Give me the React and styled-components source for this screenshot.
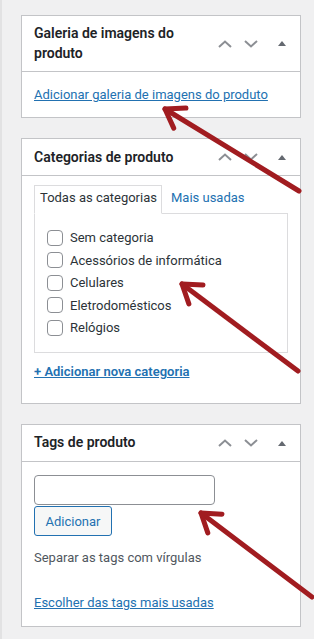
import React from 'react';
import styled, { createGlobalStyle } from 'styled-components';

const GlobalStyle = createGlobalStyle`
  html, body {
    margin: 0;
    padding: 0;
    background: #f0f0f1;
  }
  body {
    font-family: Roboto, "Liberation Sans", Arial, sans-serif;
    font-size: 13px;
    color: #3c434a;
  }
`;

const Page = styled.div`
  position: relative;
  width: 314px;
  height: 639px;
  overflow: hidden;
  box-sizing: border-box;
  padding: 15px 0 0 21px;
  display: flex;
  flex-direction: column;
  gap: 20px;
  box-shadow: inset 2px 0 0 #e2e2e3;
`;

const Postbox = styled.section`
  width: 280px;
  box-sizing: border-box;
  background: #fff;
  border: 1px solid #c3c4c7;
`;

const Header = styled.div`
  display: flex;
  align-items: center;
  border-bottom: 1px solid #c3c4c7;
`;

const Title = styled.h2`
  flex: 1;
  margin: 0;
  padding: 8px 12px;
  font-size: 14px;
  font-weight: 600;
  line-height: 1.4;
  color: #1d2327;
`;

const Handles = styled.div`
  display: flex;
  align-self: stretch;
  align-items: center;
`;

const HandleBtn = styled.button`
  width: ${(p) => p.$w}px;
  height: 36px;
  padding: 0;
  border: 0;
  background: none;
  display: flex;
  align-items: center;
  justify-content: center;
  color: #8c8f94;
`;

const Link = styled.a`
  color: #2271b1;
  text-decoration: underline;
  font-weight: ${(p) => (p.$bold ? 600 : 400)};
  line-height: 1.4;
`;

const GalleryBody = styled.div`
  padding: 14px 12px 13px;
  line-height: 1.4;
`;

const CatBody = styled.div`
  padding: 9px 12px 22px;
`;

const Tabs = styled.ul`
  display: flex;
  align-items: flex-end;
  margin: 0;
  padding: 0;
  list-style: none;
`;

const Tab = styled.li`
  padding: 3px 5px 5px;
  line-height: 1.4;
  margin-bottom: -1px;
  position: relative;
  ${(p) =>
    p.$active
      ? `border: 1px solid #dcdcde; border-bottom-color: #fff; background: #fff; color: #2c3338; padding-right: 4px;`
      : `border: 1px solid transparent; color: #2271b1; margin-left: 3px;`}
`;

const TabPanel = styled.ul`
  margin: 0;
  padding: 13px 12px;
  list-style: none;
  border: 1px solid #dcdcde;
`;

const CatRow = styled.li`
  display: flex;
  align-items: center;
  height: 22.5px;
  color: #2c3338;
`;

const Check = styled.input`
  appearance: none;
  width: 16px;
  height: 16px;
  margin: 0 7px 0 0;
  border: 1px solid #8c8f94;
  border-radius: 4px;
  background: #fff;
  box-sizing: border-box;
`;

const AddCat = styled.div`
  margin-top: 10px;
  line-height: 1.4;
`;

const TagBody = styled.div`
  padding: 13px 12px 13px;
  display: flex;
  flex-direction: column;
  align-items: flex-start;
`;

const TagInput = styled.input`
  width: 181px;
  height: 30px;
  box-sizing: border-box;
  border: 1px solid #8c8f94;
  border-radius: 4px;
  margin: 0;
`;

const AddButton = styled.button`
  width: 78px;
  height: 30px;
  margin-top: 1px;
  padding: 0;
  border: 1px solid #2271b1;
  border-radius: 3px;
  background: #f6f7f7;
  color: #2271b1;
  font-family: inherit;
  font-size: 13px;
`;

const Hint = styled.p`
  margin: 13px 0 0;
  line-height: 1.4;
  color: #50575e;
`;

const TagLinkRow = styled.p`
  margin: 27px 0 0;
  line-height: 1.4;
`;

const Overlay = styled.svg`
  position: absolute;
  left: 0;
  top: 0;
  pointer-events: none;
`;

const ChevronUp = () => (
  <svg width="14" height="8" viewBox="0 0 14 8">
    <polyline points="1,7 7,1.5 13,7" fill="none" stroke="currentColor" strokeWidth="2" />
  </svg>
);

const ChevronDown = () => (
  <svg width="14" height="8" viewBox="0 0 14 8">
    <polyline points="1,1 7,6.5 13,1" fill="none" stroke="currentColor" strokeWidth="2" />
  </svg>
);

const Caret = () => (
  <svg width="8" height="5" viewBox="0 0 8 5">
    <polygon points="0,5 4,0 8,5" fill="#646970" />
  </svg>
);

const BoxHeader = ({ children }) => (
  <Header>
    <Title>{children}</Title>
    <Handles>
      <HandleBtn $w={26}>
        <ChevronUp />
      </HandleBtn>
      <HandleBtn $w={26}>
        <ChevronDown />
      </HandleBtn>
      <HandleBtn $w={36}>
        <Caret />
      </HandleBtn>
    </Handles>
  </Header>
);

const Arrow = ({ tip, tail }) => {
  const [tx, ty] = tip;
  const a = Math.atan2(tail[1] - ty, tail[0] - tx);
  const spread = (34 * Math.PI) / 180;
  const len = 21;
  const arm = (d) => `${tx + len * Math.cos(a + d)},${ty + len * Math.sin(a + d)}`;
  return (
    <g stroke="#a11c20" strokeWidth="5" strokeLinecap="round" strokeLinejoin="round" fill="none">
      <line x1={tx} y1={ty} x2={tail[0]} y2={tail[1]} />
      <polyline points={`${arm(-spread)} ${tx},${ty} ${arm(spread)}`} />
    </g>
  );
};

const categories = ['Sem categoria', 'Acessórios de informática', 'Celulares', 'Eletrodomésticos', 'Relógios'];

export default function App() {
  return (
    <>
      <GlobalStyle />
      <Page>
        <Postbox>
          <BoxHeader>Galeria de imagens do produto</BoxHeader>
          <GalleryBody>
            <Link>Adicionar galeria de imagens do produto</Link>
          </GalleryBody>
        </Postbox>

        <Postbox>
          <BoxHeader>Categorias de produto</BoxHeader>
          <CatBody>
            <Tabs>
              <Tab $active>Todas as categorias</Tab>
              <Tab>Mais usadas</Tab>
            </Tabs>
            <TabPanel>
              {categories.map((c) => (
                <CatRow key={c}>
                  <Check type="checkbox" />
                  {c}
                </CatRow>
              ))}
            </TabPanel>
            <AddCat>
              <Link $bold>+ Adicionar nova categoria</Link>
            </AddCat>
          </CatBody>
        </Postbox>

        <Postbox>
          <BoxHeader>Tags de produto</BoxHeader>
          <TagBody>
            <TagInput type="text" />
            <AddButton>Adicionar</AddButton>
            <Hint>Separar as tags com vírgulas</Hint>
            <TagLinkRow>
              <Link>Escolher das tags mais usadas</Link>
            </TagLinkRow>
          </TagBody>
        </Postbox>

        <Overlay width="314" height="639">
          <Arrow tip={[165, 109]} tail={[299, 191]} />
          <Arrow tip={[182, 284]} tail={[298, 371]} />
          <Arrow tip={[201, 513]} tail={[312, 597]} />
        </Overlay>
      </Page>
    </>
  );
}
